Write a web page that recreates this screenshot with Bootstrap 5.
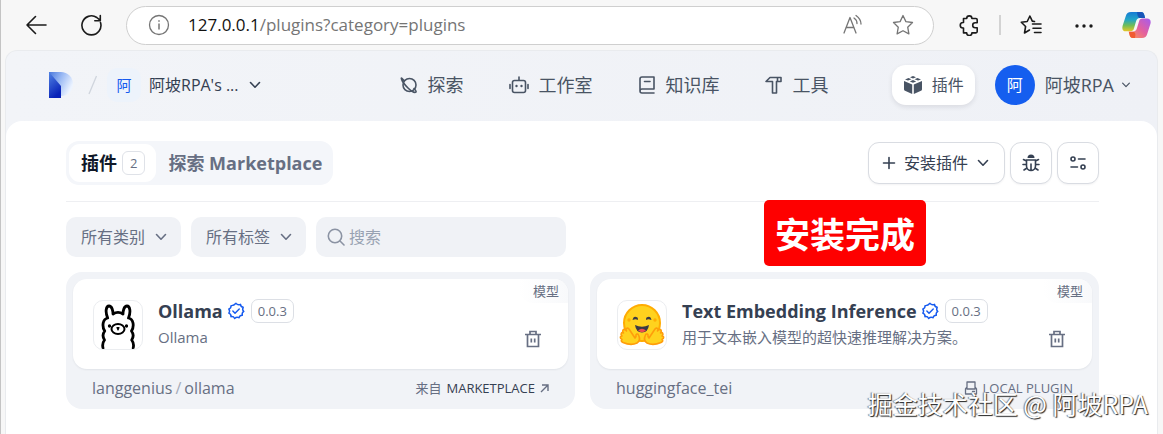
<!DOCTYPE html>
<html lang="zh-CN">
<head>
<meta charset="utf-8">
<meta name="viewport" content="width=device-width, initial-scale=1">
<title>插件</title>
<link href="https://cdn.jsdelivr.net/npm/bootstrap@5.3.0/dist/css/bootstrap.min.css" rel="stylesheet">
<style>
body{font-family:"Open Sans","Noto Sans CJK SC",sans-serif;font-size:16px;line-height:24px;background:#f7f7f7;color:#495464;border-left:1px solid #c4c4c4}
svg{display:block;flex:none}
button{font-family:inherit}
.ln{fill:none;stroke:currentColor;stroke-width:1.6;stroke-linecap:round;stroke-linejoin:round}
.thin{stroke-width:1.3}
.plain{background:none;border:0;padding:0;color:inherit;display:flex;align-items:center}
.chrome-bar{height:50px;padding:0 12px 0 24px;color:#1b1b1b}
.address{height:39px;border:1px solid #cfcfcf;border-radius:20px;background:#fff;margin-left:23px;margin-right:25px;padding:0 19px 0 21px;color:#757575;min-width:0}
.address .host{color:#111}
.address .url{font-size:17px;outline:0;white-space:nowrap;margin-left:18px}
.address .icons{gap:28px}
.divider{width:2px;height:20px;background:#d3d3d3;margin:0 19px 0 20px}
.app{margin:0 5px 0 4px;background:linear-gradient(90deg,#f2f4f8,#eff1f6);border:1px solid #e9ebee;border-bottom:0;border-radius:12px 12px 0 0}
.top-bar{height:70px;padding:0 25px 2px 43px;font-size:18px;color:#495464}
.team{width:32%;margin-right:4px;font-size:16px;color:#354052}
.team-mark{width:34px;height:34px;border-radius:10px;background:#edf3fb;color:#155aef;display:grid;place-items:center;font-size:15px;margin:0 8px 0 10px}
.slash{margin-left:14px}
.main-nav{gap:45px}
.main-nav a{color:#495464;text-decoration:none;display:flex;align-items:center;gap:10px;white-space:nowrap}
.pill{background:#fff;border-radius:14px;height:40px;padding:0 11px;box-shadow:0 2px 5px #1018281a;font-size:16px;text-decoration:none;color:#495464;gap:9px}
.avatar{width:40px;height:40px;border-radius:50%;background:#155eef;color:#fff;display:grid;place-items:center;font-size:16px;margin:0 10px 0 20px}
.account{gap:6px}
.sheet{background:#fff;border-radius:16px 16px 0 0;padding:20px 58px 0 60px}
.tabs{background:#f4f6fa;border-radius:13px;padding:3px;height:44px}
.tabs button{border:0;background:none;font-weight:700;font-size:18px;color:#676f83;border-radius:11px;padding:0 11px 0 12px;height:38px}
.tabs button + button{padding-right:8px}
.tabs .on{background:#fff;color:#101828;gap:5px}
.count{border:1px solid #dfe2e8;border-radius:6px;font-weight:400;font-size:13px;color:#676f83;padding:0 7px;line-height:22px}
.box{border:1px solid #d9dce2;border-radius:11px;background:#fff;height:42px;min-width:42px;display:flex;align-items:center;justify-content:center;color:#354052;box-shadow:0 1px 2px #1018280d;padding:0}
.install{padding:0 13px 0 12px;gap:7px}
.tools{padding-bottom:16px;border-bottom:1px solid #eeeff2}
.tool-row{gap:5px}
.filters{gap:10px;margin:15px 0}
.filter{background:#f0f2f6;border:0;border-radius:10px;height:40px;color:#676f83;font-size:16px;display:flex;align-items:center;gap:8px;padding:0 12px 0 15px}
.search{width:250px;padding:0 11px;gap:4px;color:#8b93a3}
.search input{border:0;background:none;outline:0;width:100%;color:#495464;padding:0;font-size:16px}
.search input::placeholder{color:#98a2b2}
.plug-grid{grid-template-columns:1fr 1fr;gap:15px}
.plug{background:#f1f3f7;border-radius:16px;padding:7px 7px 0}
.plug-main{background:#fff;border-radius:14px;height:90px;padding:21px 20px 0;box-shadow:0 1px 2px #10182812;position:relative}
.logo{width:50px;height:50px;border:1px solid #ebedf0;border-radius:10px;overflow:hidden;background:#fff;flex:none;display:grid;place-items:center}
.info{margin:-1px 0 0 15px}
.heading{gap:4px}
.plug h2{font-size:18px;line-height:24px;font-weight:700;color:#354052;margin:0;white-space:nowrap}
.desc{font-size:15px;line-height:22px;color:#676f83;margin-top:3px}
.ver{border:1px solid #dcdfe5;border-radius:7px;font-size:13px;line-height:22px;padding:0 6px;color:#676f83;margin-left:2px}
.seal{color:#155aef}
.kind{position:absolute;right:0;top:0;background:linear-gradient(90deg,#fff,#f8f9fb);border-radius:0 14px 0 14px;padding:0 9px 0 14px;font-size:13px;color:#676f83}
.trash{position:absolute;right:26px;top:51px;color:#676f83}
.plug-foot{height:40px;padding:0 19px 2px;font-size:16px;color:#676f83}
.path-sep{margin:0 3px;color:#a5abb8}
.from{font-size:13px;gap:5px;text-decoration:none;color:#676f83}
.market{color:#354052}
.notice{position:absolute;right:237px;top:200px;background:#fe0000;border-radius:5px;color:#fff;font:700 35px/66px "Noto Sans CJK SC",sans-serif;padding:0 11px}
.stamp{position:absolute;right:15px;top:385px;font:25px/36px "Noto Sans CJK SC",sans-serif;color:#fff;text-shadow:1px 1px 1px #222,-1px 0 1px #777;white-space:nowrap}
</style>
</head>
<body class="min-vh-100 d-flex flex-column position-relative">
<svg width="0" height="0" class="position-absolute" aria-hidden="true"><defs>
<symbol id="chev" viewBox="0 0 16 16"><path d="M3.500 5.500 8 10.200l4.500-4.700" class="ln"/></symbol>
<symbol id="ok" viewBox="0 0 20 20"><path class="ln" stroke-width="1.800" d="M10 1.500Q12 4 15 2.600q.2 2.900 3 3.300-1.500 2.600.7 4.600-2.500 1.400-1.700 4.300-2.900-.1-3.700 2.700Q10.800 16 8.500 18.300 7.300 15.700 4.400 16.300 4.700 13.400 2 12.400 3.800 10.200 2 7.800 4.700 7 4.500 4 7.400 4.400 10 1.500z"/><path class="ln" d="m6.500 10 2.400 2.500 4.700-4.700"/></symbol>
<symbol id="bin" viewBox="0 0 18 18"><path d="M1 4.500h16M3.500 4.500v12h11v-12M6 4V1.500h6V4M7.300 8.500v4M10.700 8.500v4" fill="none" stroke="currentColor" stroke-width="1.700"/></symbol>
</defs></svg>

<div class="chrome-bar d-flex align-items-center">
  <button class="plain" aria-label="返回"><svg width="24" height="24" viewBox="0 0 24 24"><path class="ln" d="M21 12H2M10.500 3.500 2 12l8.500 8.500"/></svg></button>
  <button class="plain ms-4 ps-2" aria-label="刷新"><svg width="22" height="24" viewBox="0 0 22 24"><path class="ln" d="M19.500 9.500a9.500 9.500 0 1 1-3.700-5l3.200 2.700M19.300 2.500v5.300h-5.500"/></svg></button>
  <div class="address flex-grow-1 d-flex align-items-center">
    <svg width="22" height="22" viewBox="0 0 22 22"><circle class="ln thin" cx="11" cy="11" r="9.500"/><path d="M11 9.500v6M11 6.300v1.500" stroke="currentColor" stroke-width="1.500"/></svg>
    <div class="url flex-grow-1" role="textbox" aria-label="地址" tabindex="0"><span class="host">127.0.0.1</span>/plugins?category=plugins</div>
    <div class="icons d-flex">
      <svg width="22" height="22" viewBox="0 0 22 22"><path class="ln thin" d="m2 19 6-15.500L14 19M4 13.500h8M12 4q3 2 3 5.500M14 1.500q5 3.500 5 8.500"/></svg>
      <svg width="22" height="22" viewBox="0 0 22 22"><path class="ln thin" d="m11 1.500 2.900 6.100 6.600.9-4.800 4.700 1.200 6.700L11 16.700l-5.900 3.200 1.200-6.700-4.800-4.700 6.600-.9z"/></svg>
    </div>
  </div>
  <button class="plain" aria-label="扩展"><svg width="20" height="22" viewBox="0 0 20 22"><path class="ln" d="M4.500 4.500h3.200a2.600 2.600 0 0 1 5.200 0h4a1.300 1.300 0 0 1 1.300 1.300v3h-2a2.500 2.500 0 0 0 0 5h2v3.800a1.300 1.300 0 0 1-1.300 1.300h-4a2.600 2.600 0 0 1-5.200 0H4.500V14H4a2.700 2.700 0 0 1 0-5.500h.5z"/></svg></button>
  <span class="divider"></span>
  <button class="plain" aria-label="收藏夹"><svg width="22" height="22" viewBox="0 0 22 22"><path class="ln" d="m14.500 7.500-2.200-.4L9.900 2 7.200 7.500l-5.900.8 4.300 4.200-1.100 6.500L9.500 16M12.500 10H21M13 14.300h8M14.500 18.500H21"/></svg></button>
  <button class="plain ms-4 ps-2" aria-label="更多"><svg width="20" height="20" viewBox="0 0 20 20" fill="currentColor"><circle cx="3" cy="11" r="1.700"/><circle cx="10" cy="11" r="1.700"/><circle cx="17" cy="11" r="1.700"/></svg></button>
  <button class="plain ms-4 ps-1" aria-label="Copilot"><svg width="29" height="28" viewBox="0 0 29 28"><defs><linearGradient id="g1" x1="0" y1="0" x2="0" y2="1"><stop stop-color="#167bd5"/><stop offset=".4" stop-color="#23a6c6"/><stop offset=".7" stop-color="#72bd57"/><stop offset="1" stop-color="#e7c728"/></linearGradient><linearGradient id="g2" x1="1" y1="0" x2="0" y2="1"><stop stop-color="#a55cf0"/><stop offset=".5" stop-color="#e3609f"/><stop offset="1" stop-color="#ff9a4d"/></linearGradient></defs><path fill="url(#g1)" d="M9 1h10c2 0 2.700 1 3.300 3l.8 3H18c-2.500 0-3.300 1.200-4 3.500l-2 6.800c-.6 2.200-1.500 3-3.500 3H4c-3.300 0-4.300-2.200-3.300-5.800L3.800 5C4.600 2.500 6 1 9 1z"/><path fill="#1856b8" d="M15 1h4c2 0 2.700 1 3.300 3l.8 3H18c-2 0-2.500-2.500-3-6z"/><path fill="url(#g2)" d="M20 27H11c-2.500 0-3-1.500-3.500-3.500l-.9-3H11c2.500 0 3.300-1.200 4-3.500l2-6.500c.6-2.200 1.500-3 3.500-3H25c3.300 0 4.300 2.200 3.300 5.800L25.200 23c-.8 2.500-2.200 4-5.200 4z"/><path fill="#f15b32" d="M7 21h4c2 0 3 1 2 6h-2c-2.500 0-3-1.500-3.500-3.500z"/></svg></button>
</div>

<div class="app flex-grow-1 d-flex flex-column">
  <header class="top-bar d-flex align-items-center">
    <div class="team d-flex align-items-center">
      <svg width="25" height="27" viewBox="0 0 25 27"><defs><linearGradient id="p1" x1="0" y1="0" x2="1" y2=".5"><stop stop-color="#4877dc"/><stop offset=".5" stop-color="#9bbaf4"/><stop offset="1" stop-color="#edf4ff"/></linearGradient><linearGradient id="p2" x1="0" y1="0" x2=".4" y2="1"><stop stop-color="#5284e4"/><stop offset="1" stop-color="#0822b8"/></linearGradient></defs><path fill="url(#p1)" d="M0 0h12a12 12 0 0 1 0 24H0z"/><path fill="url(#p2)" d="M0 0 12 14v12H0z"/></svg>
      <svg class="slash" width="9" height="20" viewBox="0 0 9 20"><path d="M8.500 1 1 19" stroke="#d0d5dd" stroke-width="1.300"/></svg>
      <span class="team-mark">阿</span>
      <button class="plain gap-2"><span class="text-nowrap">阿坡RPA's ...</span><svg width="16" height="16"><use href="#chev"/></svg></button>
    </div>
    <nav class="main-nav d-flex" aria-label="主导航">
      <a href="#"><svg width="18" height="18" viewBox="0 0 18 18"><circle class="ln" cx="9.500" cy="9" r="6.500"/><path class="ln" d="M4 4.500C1.500 2 1 1.500 1.500 3c.5 2 3 5.500 6.500 9s7 5 8 4c.7-.8-.5-2-2-3.500"/></svg>探索</a>
      <a href="#"><svg width="20" height="18" viewBox="0 0 20 18"><rect class="ln" x="3.500" y="4.500" width="13" height="12" rx="2"/><path class="ln" d="M10 1v3M1 8.500v4M19 8.500v4"/><circle cx="7.500" cy="10" r="1.200" fill="currentColor"/><circle cx="12.500" cy="10" r="1.200" fill="currentColor"/></svg>工作室</a>
      <a href="#"><svg width="18" height="18" viewBox="0 0 18 18"><path class="ln" d="M16 13V1H4Q2 1 2 3v12q0 2 2 2h12M2 15q0-2 2-2h12M6.500 5.500H12"/></svg>知识库</a>
      <a href="#"><svg width="18" height="18" viewBox="0 0 18 18"><path class="ln" d="M1 5.500 5 1.500h11v4h-4.500V17h-4V5.500zM12.500 1.500v4"/></svg>工具</a>
    </nav>
    <div class="ms-auto d-flex align-items-center">
      <a href="#" class="pill d-flex align-items-center"><svg width="20" height="20" viewBox="0 0 20 20" fill="currentColor"><path d="m1 6 8.200 3.500V19L2 15.800q-1-.5-1-1.500zM19 6l-8.200 3.500V19l7.200-3.200q1-.5 1-1.500zM10 1l3 1.200-3 1.300-3-1.300zM5.500 2.900l3 1.300L5 5.600 2 4.400zM14.500 2.900l3.500 1.500L15 5.600l-3.500-1.400zM10 5l3.200 1.400L10 7.800 6.800 6.400z"/></svg>插件</a>
      <span class="avatar">阿</span>
      <button class="plain account text-nowrap">阿坡RPA<svg width="12" height="12"><use href="#chev"/></svg></button>
    </div>
  </header>
  <main class="sheet flex-grow-1">
    <div class="tools d-flex justify-content-between align-items-center">
      <div class="tabs d-flex">
        <button class="on d-flex align-items-center">插件<span class="count">2</span></button>
        <button>探索 Marketplace</button>
      </div>
      <div class="tool-row d-flex">
        <button class="box install"><svg width="16" height="16" viewBox="0 0 16 16"><path class="ln" d="M8 2.500v11M2.500 8h11"/></svg>安装插件<svg width="16" height="16"><use href="#chev"/></svg></button>
        <button class="box" aria-label="调试"><svg width="18" height="18" viewBox="0 0 18 18"><path class="ln" d="M4.500 6h9v6a4.500 4.500 0 0 1-9 0zM9 10v6M1 10.500h3.500M13.500 10.500H17M1.500 5.500 4.500 7M16.500 5.500l-3 1.500M2 16l3-2M16 16l-3-2"/><path d="M5.500 4a3.500 3.500 0 0 1 7 0z" fill="currentColor"/></svg></button>
        <button class="box" aria-label="设置"><svg width="18" height="18" viewBox="0 0 18 18"><circle class="ln" cx="4" cy="5" r="2"/><circle class="ln" cx="14" cy="13" r="2"/><path class="ln" d="M9.500 5H16M2 13h6.500"/></svg></button>
      </div>
    </div>
    <div class="filters d-flex">
      <button class="filter">所有类别<svg width="16" height="16"><use href="#chev"/></svg></button>
      <button class="filter">所有标签<svg width="16" height="16"><use href="#chev"/></svg></button>
      <label class="filter search"><svg width="18" height="18" viewBox="0 0 18 18"><circle class="ln" cx="8" cy="8" r="6.700"/><path class="ln" d="m13 13 4 4"/></svg><input type="text" placeholder="搜索" aria-label="搜索"></label>
    </div>
    <div class="plug-grid d-grid">
      <article class="plug">
        <div class="plug-main d-flex">
          <div class="logo"><svg width="48" height="48" viewBox="0 0 48 48" fill="none" stroke="#000" stroke-width="2.800" stroke-linecap="round" stroke-linejoin="round"><path d="M9 47c-1-4 0-6 1.500-8-2-3-2-6 .2-9-3-5-2-12 3-13C11 11 12 5 15 5s4 5 4 8c3-2 7-2 10 0 0-3 1-8 4-8s4 6 1.500 12c5 1 6 8 3 13 2.200 3 2.200 6 .2 9 1.500 2 2.500 4 1.500 8"/><ellipse cx="24" cy="28" rx="6.500" ry="5" stroke-width="2"/><path d="M23 26.500h2L24 29z" stroke-width="1.200"/><circle cx="15.500" cy="25" r="1" fill="#000" stroke-width="1.300"/><circle cx="32.500" cy="25" r="1" fill="#000" stroke-width="1.300"/></svg></div>
          <div class="info"><div class="heading d-flex align-items-center"><h2>Ollama</h2><svg width="18" height="18" class="seal"><use href="#ok"/></svg><span class="ver">0.0.3</span></div><div class="desc">Ollama</div></div>
          <span class="kind">模型</span>
          <button class="plain trash" aria-label="删除"><svg width="18" height="18"><use href="#bin"/></svg></button>
        </div>
        <div class="plug-foot d-flex align-items-center justify-content-between"><span>langgenius<span class="path-sep">/</span>ollama</span><a href="#" class="from d-flex align-items-center">来自 <span class="market">MARKETPLACE</span><svg width="9" height="9" viewBox="0 0 9 9"><path d="M1 8 8 1M2 1h6v6" fill="none" stroke="currentColor" stroke-width="1.400"/></svg></a></div>
      </article>
      <article class="plug">
        <div class="plug-main d-flex">
          <div class="logo"><svg width="48" height="48" viewBox="0 0 48 48"><circle cx="24" cy="22" r="18" fill="#ffd21e" stroke="#ffac03" stroke-width="2"/><circle cx="11" cy="19" r="1.700" fill="#ffad03"/><circle cx="37" cy="19" r="1.700" fill="#ffad03"/><path d="M14.500 19q1-5 5-2.500.8 1 .3 2.500-2-1.500-5.300 0zM33.500 19q-1-5-5-2.500-.8 1-.3 2.500 2-1.500 5.300 0z" fill="#3a3b45"/><path d="M17 24q7 3.500 14 0-1 7.500-7 7.500T17 24z" fill="#3a3b45"/><path d="M20 29.500q4-3.500 8 0-4 3.500-8 0z" fill="#ef4e4e"/><g fill="#ffd21e" stroke="#ff9d0b" stroke-width="1.600" stroke-linejoin="round"><path id="hand" d="M19 42c3-2 3-5 1.500-8-1-2-3-1-2.500 1.500L17 37l-6-9c-2-2-4 0-2.500 2l-1-1c-2-1.500-4 .5-2 3-2-1-3.500 1-1.500 3-2 0-2.500 2 0 3.500-1.500 1-.5 2.500 1 3q8 3.500 14 .5z"/><use href="#hand" transform="matrix(-1 0 0 1 48 0)"/></g></svg></div>
          <div class="info"><div class="heading d-flex align-items-center"><h2>Text Embedding Inference</h2><svg width="18" height="18" class="seal"><use href="#ok"/></svg><span class="ver">0.0.3</span></div><div class="desc">用于文本嵌入模型的超快速推理解决方案。</div></div>
          <span class="kind">模型</span>
          <button class="plain trash" aria-label="删除"><svg width="18" height="18"><use href="#bin"/></svg></button>
        </div>
        <div class="plug-foot d-flex align-items-center justify-content-between"><span>huggingface_tei</span><span class="from d-flex align-items-center"><svg width="14" height="14" viewBox="0 0 14 14"><path class="ln thin" d="M3 1h8v7H3zM3 6 1.500 8v5h11V8L11 6M8.500 10.500h2"/></svg>LOCAL PLUGIN</span></div>
      </article>
    </div>
  </main>
</div>
<div class="notice">安装完成</div>
<div class="stamp">掘金技术社区 @ 阿坡RPA</div>
<script src="https://cdn.jsdelivr.net/npm/bootstrap@5.3.0/dist/js/bootstrap.bundle.min.js"></script>
</body>
</html>
